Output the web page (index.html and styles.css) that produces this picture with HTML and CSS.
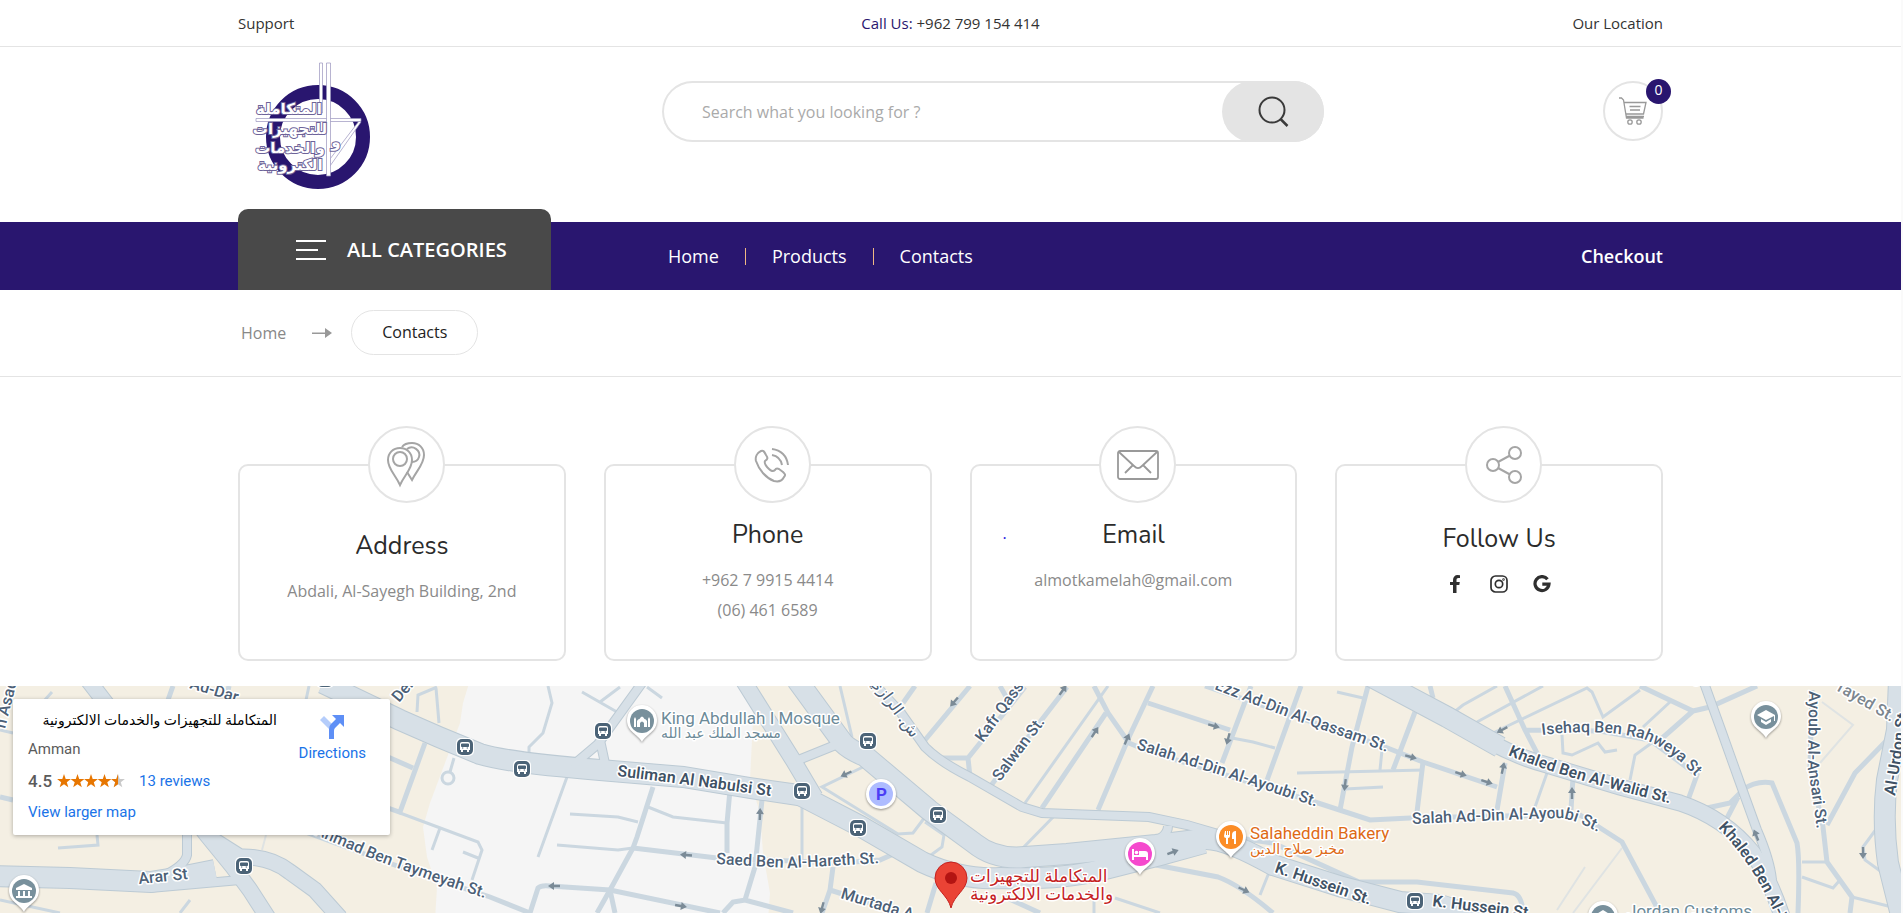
FILE: index.html
```
<!DOCTYPE html>
<html lang="en">
  <head>
    <title>Contacts</title>
    <meta charset="UTF-8">
    <meta name="viewport" content="width=device-width, initial-scale=1">
    <link rel="stylesheet" href="styles.css">
  </head>
  <body>
    <div class="top-bar">
      <div class="container top-bar-inner">
        <a href="#">Support</a>
        <a href="tel:+962799154414"><span class="call-label">Call Us:</span> +962 799 154 414</a>
        <a href="#map">Our Location</a>
      </div>
    </div>

    <header class="header">
      <div class="container header-inner">
        <a href="#" class="logo">
          <svg width="140" height="140" viewBox="-2 0 140 140">
            <circle cx="78" cy="82" r="45" fill="none" stroke="#29166f" stroke-width="14"/>
            <g fill="#fff" stroke="#9a93bd" stroke-width=".7">
              <path d="M79.500 8h3v50h-3z"/>
              <path d="M119 66L90 104v7L121 67z"/>
              <path d="M16 63.500h105v3H16z"/>
              <path d="M86.500 8h4v113h-4z"/>
            </g>
            <g class="logo-text">
              <text x="49" y="59">المتكاملة</text>
              <text x="50" y="79">للتجهيزات</text>
              <text x="50" y="98">والخدمات</text>
              <text x="50" y="115">الكترونية</text>
              <text x="96" y="92">و</text>
            </g>
          </svg>
        </a>
        <form class="search">
          <input type="text" placeholder="Search what you looking for ?" aria-label="Search">
          <button type="button" aria-label="Search">
            <svg width="34" height="34" viewBox="0 0 34 34" fill="none" stroke="#3a3a3a" stroke-width="2">
              <circle cx="16" cy="15" r="12.500"/>
              <path d="M24.500 24L31.500 31" stroke-width="2.500"/>
            </svg>
          </button>
        </form>
        <a href="#" class="cart" aria-label="Cart">
          <svg width="30" height="30" viewBox="0 0 30 30" fill="none" stroke="#999" stroke-width="1.300">
            <path d="M1 2h2.500l2 2 3 18h17M5.500 6.500H28l-2.500 11.500H8M8 20.500h18"/>
            <path d="M11.500 10.500h11M12 14h10"/>
            <circle cx="12" cy="26" r="2.200"/>
            <circle cx="21" cy="26" r="2.200"/>
          </svg>
          <span class="cart-count">0</span>
        </a>
      </div>
    </header>

    <nav class="nav">
      <div class="container nav-inner">
        <button type="button" class="categories">
          <span class="burger"><i></i><i></i><i></i></span>
          ALL CATEGORIES
        </button>
        <ul class="menu">
          <li><a href="#">Home</a></li>
          <li><a href="#">Products</a></li>
          <li><a href="#">Contacts</a></li>
        </ul>
        <a href="#" class="checkout">Checkout</a>
      </div>
    </nav>

    <div class="breadcrumb">
      <div class="container breadcrumb-inner">
        <a href="#">Home</a>
        <svg width="20" height="12" viewBox="0 0 20 12"><path d="M0 5.500h13V1l7 5-7 5V7H0z" fill="#999"/></svg>
        <span class="current">Contacts</span>
      </div>
    </div>

    <main class="container cards">
      <section class="card card-address">
        <span class="card-icon">
          <svg width="46" height="46" viewBox="0 0 46 46" fill="none" stroke="#a5a5a5" stroke-width="2">
            <path d="M17 6C10 6 5 11 5 18c0 9 7 14 12 25 5-11 12-16 12-25 0-7-5-12-12-12z"/>
            <circle cx="17" cy="17" r="7"/>
            <path d="M19 5c2-3 6-4 10-4 7 0 12 5 12 12 0 9-7 15-12 25l-5-8"/>
            <path d="M24 7c6-5 14 2 12 8-1 3-4 5-7 5"/>
          </svg>
        </span>
        <h3>Address</h3>
        <p>Abdali, Al-Sayegh Building, 2nd</p>
      </section>
      <section class="card">
        <span class="card-icon">
          <svg width="36" height="36" viewBox="0 0 36 36" fill="none" stroke="#a5a5a5" stroke-width="2">
            <path d="M7 4c-4 2-6 6-5 10 3 9 10 17 18 20 4 1 8 0 10-4 2-2 1-3-1-5l-4-3c-2-1-3-1-4 1-2 2-4 1-6-1-3-3-5-6-4-8 3-2 3-3 1-6-2-4-3-5-5-4z"/>
            <path d="M18 2c9 1 15 7 16 16M18 8c6 1 9 5 10 10"/>
          </svg>
        </span>
        <h3>Phone</h3>
        <p>+962 7 9915 4414</p>
        <p>(06) 461 6589</p>
      </section>
      <section class="card">
        <span class="card-icon">
          <svg width="42" height="30" viewBox="0 0 42 30" fill="none" stroke="#999" stroke-width="1.800">
            <rect x="1" y="1" width="40" height="28" rx="2"/>
            <path d="M2 2l15 14c3 3 5 3 8 0L40 2M16 15L8 23M26 15l8 8"/>
          </svg>
        </span>
        <a href="#" class="card-dot">.</a>
        <h3>Email</h3>
        <p>almotkamelah@gmail.com</p>
      </section>
      <section class="card card-social">
        <span class="card-icon">
          <svg width="36" height="38" viewBox="0 0 36 38" fill="none" stroke="#a5a5a5" stroke-width="2">
            <circle cx="29" cy="7" r="6"/>
            <circle cx="7" cy="19" r="6"/>
            <circle cx="29" cy="31" r="6"/>
            <path d="M12 16l12-6.500M12 22l12 6.500"/>
          </svg>
        </span>
        <h3>Follow Us</h3>
        <div class="social">
          <a href="#" aria-label="Facebook">
            <svg width="18" height="18" viewBox="0 0 18 18" fill="#2f2f2f"><path d="M6 18v-8H3V7h3V5c0-3 2-5 4.500-5l2.500.2V3h-1.500C10 3 9.500 3.700 9.500 5v2h3.300l-.5 3H9.500v8z"/></svg>
          </a>
          <a href="#" aria-label="Instagram">
            <svg width="18" height="18" viewBox="0 0 18 18" fill="none" stroke="#2f2f2f" stroke-width="1.700"><rect x="1" y="1" width="16" height="16" rx="4.500"/><circle cx="9" cy="9" r="3.700"/><circle cx="13.500" cy="4.500" r=".4"/></svg>
          </a>
          <a href="#" aria-label="Google">
            <svg width="18" height="18" viewBox="0 0 18 18" fill="none" stroke="#2f2f2f" stroke-width="3.200"><path d="M14.500 4.200A7 7 0 1 0 16 9.200H9.300"/></svg>
          </a>
        </div>
      </section>
    </main>

    <section class="map" id="map">
      <svg class="map-canvas" viewBox="0 686 1901 227" preserveAspectRatio="xMidYMin slice">
        <defs>
          <g id="major-roads">
            <path class="w22" d="M323 683L400 720Q440 738 480 754Q510 763 600 770L683 777L750 788L812 797"/>
            <path class="w16" d="M743 680L793 760L815 797"/>
            <path class="w22" d="M800 795L860 826L922 862Q960 880 1000 878Q1060 880 1101 870L1160 855L1204 843"/>
            <path class="w22" d="M797 680L843 743Q850 750 865 756L929 810L974 843Q995 860 1025 857L1067 854L1156 845L1204 839Q1225 838 1273 865L1342 887L1400 902L1440 905L1480 918"/>
            <path class="w10" d="M880 690L901 713L925 747Q940 762 970 777L1022 807L1042 813L1149 817L1187 825L1225 836"/>
            <path class="w10" d="M838 744L796 761M1168 826Q1168 838 1145 845M642 683L598 744L572 766M600 740L606 768"/>
            <path class="w22" d="M1370 676L1447 717L1500 747"/>
            <path class="w16" d="M1490 742Q1520 758 1547 765L1620 787L1680 803Q1725 818 1753 853Q1770 880 1782 916"/>
            <path class="w10" d="M1703 680L1720 727L1740 783L1757 830Q1770 860 1772 880"/>
            <path class="w22" d="M1899 680L1897 730L1887 780Q1882 820 1888 863L1901 915"/>
            <path class="w22" d="M-5 876L70 878L150 882L175 878L215 870"/>
            <path class="w16" d="M88 680L207 835L233 867L250 890L268 918"/>
            <path class="w16" d="M210 838L240 857Q270 856 290 872L315 890L340 918"/>
            <path class="w10" d="M187 830V855Q185 865 165 875M150 888L240 880"/>
          </g>
          <g id="pin">
            <path d="M0 20C-4 12-15 10-15-2A15 15 0 0 1 15-2C15 10 4 12 0 20z" fill="#fff"/>
          </g>
          <g id="bus">
            <rect x="-9" y="-9" width="18" height="18" rx="5" fill="#fff"/>
            <rect x="-8" y="-8" width="16" height="16" rx="5" fill="#4b6377"/>
            <path d="M-5-3Q-5-5-3-5H3Q5-5 5-3V3H4V5H2V3H-2V5H-4V3H-5z" fill="#fff"/>
            <path d="M-3.500-3h7v2.500h-7zM-3 1h1.300M1.700 1H3" fill="#4b6377" stroke="#4b6377"/>
          </g>
          <path id="arrow" d="M-6-1.200H0V-4L6 0 0 4V1.200H-6z" fill="#7b8b97"/>
        </defs>

        <rect y="680" width="1901" height="240" fill="#f4efe3"/>
        <path d="M470 680L463 703 460 723 430 803 423 827 427 857 437 887 435 920H768L770 893 763 853 760 813 750 780 755 680z" fill="#f5f5f5"/>

        <g class="minor thin">
          <path d="M400 813L478 842 482 850 472 880M440 828L432 850M463 852L478 858M454 758L450 772M417 712L418 695 437 687M436 688L439 723"/>
          <circle cx="448" cy="778" r="6"/>
          <path d="M52 692L43 702M0 730L13 733M97 835L98 845 58 848M190 900L180 913M0 900L60 913M309 686L306 700"/>
          <path d="M548 686L552 703 543 733 529 747V762M582 692L617 712M600 702L620 687M647 687L662 698M567 777L538 857"/>
          <path d="M570 814L618 817 638 822M648 807L673 817 727 823M557 845L618 850 633 848M802 803V860M840 686L852 737M863 767L822 787L898 834 913 833 925 817M925 822L944 835 942 847 931 855"/>
          <path d="M1108 686L1025 803M1232 738L1253 742 1275 748M1337 692L1363 698M1297 773L1424 770M1345 789L1383 787M1060 810L1018 853M1270 870L1260 895M1094 900V913M1115 898L1160 913"/>
          <path d="M1547 773L1535 807M1453 713L1463 705 1497 686M1455 712L1490 732M1477 722L1543 686M1493 733L1587 688 1592 692 1603 717 1640 690M1670 702L1643 727M1562 735L1563 753 1572 755 1598 743 1605 752 1617 750M1653 742L1635 755 1630 780"/>
          <path d="M1802 862H1825M1802 877L1833 888 1840 880M1852 897L1900 909M1877 828L1863 847 1865 860 1883 873M1380 770L1382 750"/>
        </g>
        <g class="minor faint">
          <path d="M1822 702L1853 725 1820 763M1622 848L1573 913M1585 867L1557 910M266 835L262 850"/>
        </g>
        <g class="minor">
          <path d="M425 743L400 812M388 757L413 768M388 808L402 813M173 686L168 700M229 686L226 700M0 797L13 800"/>
          <path d="M300 830L400 867 490 897 530 913M653 787L637 837 633 848 610 890 597 913M610 890L615 913"/>
          <path d="M633 848L717 858 840 863 880 860 898 852M730 790L727 823V853M762 800L755 867 745 900M530 913L538 888Q541 885 550 886L610 890 720 913M723 913L733 902 745 900 793 913M833 867L830 890 822 913M830 890L880 906"/>
          <path d="M936 883L927 913M1005 897L1040 913M970 686L925 740M915 686L903 703M1000 686L1008 700M943 758H968L970 777M968 758L1025 687M989 788L1067 687M1106 713L1042 808"/>
          <path d="M1094 686L1108 713 1129 743 1150 752 1318 803 1370 820 1410 818 1500 816 1580 815 1622 842 1660 913"/>
          <path d="M1153 686L1129 737 1098 810M1148 703L1230 730M1251 686L1222 763M1301 686L1266 783M1368 686L1352 747 1340 810M1205 686L1380 745 1423 762 1497 787"/>
          <path d="M1225 836L1273 843 1359 882H1417L1513 893Q1522 895 1523 913M1156 865L1218 877Q1240 885 1273 913"/>
          <path d="M1415 712L1393 770M1423 762L1417 812M1505 763L1497 810M1573 777L1571 810M1505 686L1525 730 1538 755M1525 730L1600 731 1650 740 1697 775 1688 800"/>
          <path d="M1640 686L1693 711 1710 707 1757 686M1693 711L1660 740M1742 790Q1757 780 1772 783L1797 843Q1800 860 1798 913M1707 808L1730 803 1740 793M1738 797L1725 822"/>
          <path d="M1890 737L1855 773 1827 825M1812 690L1810 767 1823 827 1827 862 1852 897 1850 913M1430 686L1433 698"/>
        </g>

        <use href="#major-roads" class="road-edge"/>
        <use href="#major-roads" class="road-fill"/>

        <use href="#arrow" transform="translate(686 855) rotate(185)"/>
        <use href="#arrow" transform="translate(554 886) rotate(180)"/>
        <use href="#arrow" transform="translate(681 906) rotate(10)"/>
        <use href="#arrow" transform="translate(760 814) rotate(-88)"/>
        <use href="#arrow" transform="translate(822 908) rotate(105)"/>
        <use href="#arrow" transform="translate(846 774) rotate(155)"/>
        <use href="#arrow" transform="translate(954 702) rotate(130)"/>
        <use href="#arrow" transform="translate(1063 690) rotate(-55)"/>
        <use href="#arrow" transform="translate(1095 732) rotate(-57)"/>
        <use href="#arrow" transform="translate(1127 739) rotate(-67)"/>
        <use href="#arrow" transform="translate(1214 726) rotate(15)"/>
        <use href="#arrow" transform="translate(1228 739) rotate(105)"/>
        <use href="#arrow" transform="translate(1345 785) rotate(97)"/>
        <use href="#arrow" transform="translate(1173 852) rotate(-20)"/>
        <use href="#arrow" transform="translate(1244 890) rotate(25)"/>
        <use href="#arrow" transform="translate(1411 757) rotate(15)"/>
        <use href="#arrow" transform="translate(1461 774) rotate(18)"/>
        <use href="#arrow" transform="translate(1487 782) rotate(18)"/>
        <use href="#arrow" transform="translate(1503 768) rotate(-78)"/>
        <use href="#arrow" transform="translate(1572 793) rotate(-90)"/>
        <use href="#arrow" transform="translate(1502 730) rotate(152)"/>
        <use href="#arrow" transform="translate(1756 835) rotate(-112)"/>
        <use href="#arrow" transform="translate(1863 853) rotate(90)"/>

        <defs>
          <path id="p-ahmad" d="M314 834L370 858L430 880L520 910"/>
          <path id="p-suliman" d="M617 776L690 785L800 800"/>
          <path id="p-saed" d="M716 864L790 868L900 862"/>
          <path id="p-ezz" d="M1214 689L1300 722L1410 760"/>
          <path id="p-salah1" d="M1136 749L1220 775L1350 818"/>
          <path id="p-salah2" d="M1412 824Q1500 820 1560 818Q1580 820 1615 842"/>
          <path id="p-isehaq" d="M1542 735Q1600 728 1640 738Q1675 750 1705 788"/>
          <path id="p-khaled1" d="M1508 755Q1560 778 1690 808"/>
          <path id="p-khaled2" d="M1718 828Q1755 865 1782 930"/>
          <path id="p-ayoub" d="M1809 691L1808 767L1820 850"/>
        </defs>
        <g class="street">
          <text transform="translate(139 884) rotate(-6)">Arar St</text>
          <text><textPath href="#p-ahmad">Ahmad Ben Taymeyah St.</textPath></text>
          <text class="strong"><textPath href="#p-suliman">Suliman Al Nabulsi St</textPath></text>
          <text><textPath href="#p-saed">Saed Ben Al-Hareth St.</textPath></text>
          <text transform="translate(840 898) rotate(17)">Murtada A</text>
          <text transform="translate(983 743) rotate(-54)">Kafr Qassem</text>
          <text transform="translate(1000 782) rotate(-53)">Salwan St.</text>
          <text transform="translate(891 710) rotate(54)" text-anchor="middle">ش. الرازي</text>
          <text><textPath href="#p-ezz">Ezz Ad-Din Al-Qassam St.</textPath></text>
          <text><textPath href="#p-salah1">Salah Ad-Din Al-Ayoubi St.</textPath></text>
          <text><textPath href="#p-salah2">Salah Ad-Din Al-Ayoubi St.</textPath></text>
          <text><textPath href="#p-isehaq">Isehaq Ben Rahweya St</textPath></text>
          <text class="strong"><textPath href="#p-khaled1">Khaled Ben Al-Walid St.</textPath></text>
          <text class="strong"><textPath href="#p-khaled2">Khaled Ben Al-Walid</textPath></text>
          <text><textPath href="#p-ayoub">Ayoub Al-Ansari St.</textPath></text>
          <text class="strong" transform="translate(1895 796) rotate(-81)">Al-Urdon St</text>
          <text class="plain" transform="translate(1834 689) rotate(30)">Tayed St.</text>
          <text class="strong" transform="translate(1274 872) rotate(19)">K. Hussein St.</text>
          <text class="strong" transform="translate(1432 906) rotate(7)">K. Hussein St.</text>
          <text transform="translate(399 703) rotate(-50)">Der</text>
          <text transform="translate(189 688) rotate(17)">Ad-Dar</text>
          <text transform="translate(5 729) rotate(-76)">n Asad</text>
        </g>

        <use href="#bus" x="325" y="679"/>
        <use href="#bus" x="465" y="747"/>
        <use href="#bus" x="522" y="769"/>
        <use href="#bus" x="603" y="731"/>
        <use href="#bus" x="868" y="741"/>
        <use href="#bus" x="802" y="791"/>
        <use href="#bus" x="858" y="828"/>
        <use href="#bus" x="938" y="815"/>
        <use href="#bus" x="244" y="866"/>
        <use href="#bus" x="1415" y="901"/>

        <g class="poi-pin" transform="translate(642 722)">
          <use href="#pin"/>
          <circle cy="-1" r="12" fill="#78909c"/>
          <path d="M-8 5V-3l1-2 1 2V5zM8 5V-3L7-5 6-3V5zM-5 5V-1Q-4-3-2.500-3Q0-8 2.500-3Q4-3 5-1V5H2V1Q0-2-2 1V5z" fill="#fff"/>
        </g>
        <g class="poi-pin" transform="translate(24 892)">
          <use href="#pin"/>
          <circle cy="-1" r="12" fill="#78909c"/>
          <path d="M-8-4L0-8 8-4V-2H-8zM-6-1h2v5h-2zM-1-1h2v5h-2zM4-1h2v5H4zM-8 4H8v2H-8z" fill="#fff"/>
        </g>
        <g class="poi-pin" transform="translate(1766 718)">
          <use href="#pin"/>
          <circle cy="-1" r="12" fill="#78909c"/>
          <path d="M-9-3L0-8 9-3V3H8V-2L0 2zM-5 1L0 4 5 1V4L0 7-5 4z" fill="#fff"/>
        </g>
        <g class="poi-pin" transform="translate(1603 918)">
          <use href="#pin"/>
          <circle cy="-1" r="12" fill="#78909c"/>
          <path d="M-8-3L0-8 8-3V5H-8z" fill="#fff"/>
        </g>
        <g class="poi-pin" transform="translate(1140 855)">
          <use href="#pin"/>
          <circle cy="-1" r="12" fill="#f549cd"/>
          <path d="M-8-6h2v6h5v-4h6q3 0 3 3V5H6V2H-6V5H-8z" fill="#fff"/>
          <circle cx="-3.500" cy="-2.500" r="1.800" fill="#fff"/>
        </g>
        <g class="poi-pin" transform="translate(1231 838)">
          <use href="#pin"/>
          <circle cy="-1" r="12" fill="#fb8c26"/>
          <path d="M-6-7h1v4h1v-4h1v4h1v-4h1v5q0 2-2 2V6h-2V0q-2 0-2-2zM5-7V6H3V1H1V-3Q1-7 5-7z" fill="#fff"/>
        </g>
        <g class="poi-pin">
          <circle cx="881" cy="794" r="15" fill="#fff"/>
          <circle cx="881" cy="794" r="12" fill="#aebcff"/>
        </g>
        <text x="876" y="800" class="parking">P</text>
        <circle cx="1696" cy="680" r="6" fill="#78909c" stroke="#fff" stroke-width="2"/>

        <g class="poi">
          <text x="661" y="724">King Abdullah I Mosque</text>
          <text x="661" y="738" class="small">مسجد الملك عبد الله</text>
          <text x="1627" y="917">Jordan Customs</text>
          <text x="1250" y="839" class="food">Salaheddin Bakery</text>
          <text x="1250" y="854" class="food small">مخبز صلاح الدين</text>
          <text x="970" y="882" class="place">المتكاملة للتجهيزات</text>
          <text x="970" y="900" class="place">والخدمات الالكترونية</text>
        </g>

        <path d="M951 908C948 895 935 890 935 878A16 16 0 0 1 967 878C967 890 954 895 951 908z" fill="#ea4335" stroke="#c5221f"/>
        <circle cx="951" cy="878" r="6" fill="#b31412"/>
      </svg>

      <div class="place-card">
        <div class="place-info">
          <h4 dir="rtl">المتكاملة للتجهيزات والخدمات الالكترونية</h4>
          <p>Amman</p>
          <div class="rating">
            <strong>4.5</strong>
            <svg width="68" height="14" viewBox="0 0 68 14">
              <defs>
                <path id="star" d="M7 0l1.700 4.900 5.200.1-4.100 3.200 1.500 5L7 10.200 2.700 13.200l1.500-5L.1 5l5.200-.1z"/>
              </defs>
              <g fill="#e77600">
                <use href="#star"/>
                <use href="#star" x="13.500"/>
                <use href="#star" x="27"/>
                <use href="#star" x="40.500"/>
              </g>
              <use href="#star" x="54" fill="#c9c9c9"/>
              <path d="M61 0v10.200l-4.300 3 1.500-5L54.100 5l5.200-.1z" fill="#e77600"/>
            </svg>
            <a href="#">13 reviews</a>
          </div>
          <a href="#">View larger map</a>
        </div>
        <a href="#" class="directions">
          <svg width="24" height="24" viewBox="0 0 24 24">
            <path d="M0 5l4-4 8 8-3 5z" fill="#b5cdfb"/>
            <path d="M9 24V14q0-3 2-5l5-5-4-4h12v12l-4-4-5 5q-1 1-1 3v8z" fill="#5e8ff6"/>
          </svg>
          Directions
        </a>
      </div>
    </section>
  </body>
</html>
```
FILE: styles.css
```
* {
  box-sizing: border-box;
}

body {
  display: flex;
  flex-direction: column;
  min-height: 100vh;
  margin: 0;
  border-right: 2px solid #fafafa;
  background-color: #fff;
  color: #333;
  font-family: "Open Sans", "DejaVu Sans", sans-serif;
  font-size: 16px;
}

a {
  color: inherit;
  text-decoration: none;
}

button {
  border: 0;
  cursor: pointer;
  font-family: inherit;
}

h3, h4, p, ul {
  margin: 0;
  padding: 0;
}

svg {
  display: block;
}

.container {
  width: 100%;
  max-width: 1425px;
  margin: 0 auto;
}

/* top bar */
.top-bar {
  border-bottom: 1px solid #e4e4e4;
  font-size: 15px;
  line-height: 46px;
}

.top-bar-inner {
  display: grid;
  grid-template-columns: 1fr auto 1fr;
}

.top-bar-inner a:last-child {
  text-align: right;
}

.call-label {
  color: #29166f;
}

/* header */
.header-inner {
  display: grid;
  grid-template-columns: 424px minmax(0, 662px) 1fr;
  align-items: start;
  padding: 8px 0 27px;
}

.logo {
  justify-self: start;
}

.logo-text {
  fill: #fff;
  stroke: #6d6399;
  stroke-width: 2px;
  paint-order: stroke;
  font-family: "DejaVu Sans", sans-serif;
  font-size: 15px;
  font-weight: bold;
  text-anchor: middle;
}

.search {
  display: flex;
  height: 61px;
  margin-top: 26px;
  border-radius: 31px;
  box-shadow: inset 0 0 0 2px #e4e4e4;
}

.search input {
  flex: 1;
  min-width: 0;
  padding: 0 40px;
  border: 0;
  background: none;
  color: #333;
  font-family: inherit;
  font-size: 16px;
  outline: 0;
}

.search input::placeholder {
  color: #aaa;
}

.search button {
  display: flex;
  align-items: center;
  justify-content: center;
  width: 102px;
  border-radius: 31px;
  background-color: #e4e4e4;
}

.cart {
  position: relative;
  display: flex;
  align-items: center;
  justify-content: center;
  justify-self: end;
  width: 60px;
  height: 60px;
  margin-top: 26px;
  border: 2px solid #e4e4e4;
  border-radius: 50%;
}

.cart-count {
  position: absolute;
  top: -4px;
  right: -10px;
  width: 25px;
  height: 25px;
  border-radius: 50%;
  background-color: #29166f;
  color: #fff;
  font-size: 14px;
  line-height: 22px;
  text-align: center;
}

/* navigation */
.nav {
  background-color: #29166f;
  color: #fff;
  font-size: 18px;
}

.nav-inner {
  display: flex;
  align-items: center;
  height: 68px;
}

.categories {
  display: flex;
  align-items: center;
  align-self: flex-end;
  gap: 21px;
  width: 313px;
  height: 81px;
  padding: 0 0 0 58px;
  border-radius: 10px 10px 0 0;
  background-color: #494949;
  color: #fff;
  font-size: 20px;
  font-weight: 600;
}

.burger {
  display: grid;
  gap: 7px;
  width: 30px;
}

.burger i {
  height: 2px;
  background-color: #fff;
}

.burger i:nth-child(2) {
  width: 22px;
}

.menu {
  display: flex;
  margin-left: 91px;
  font-weight: 500;
  line-height: 17px;
  list-style: none;
}

.menu li {
  padding: 0 26px;
}

.menu li + li {
  border-left: 1px solid #f0b884;
}

.checkout {
  margin-left: auto;
  font-weight: 600;
}

/* breadcrumb */
.breadcrumb {
  border-bottom: 1px solid #e4e4e4;
}

.breadcrumb-inner {
  display: flex;
  align-items: center;
  padding: 20px 3px 21px;
  color: #888;
}

.breadcrumb-inner svg {
  margin: 0 19px 0 26px;
}

.current {
  padding: 0 30px;
  border: 1px solid #e4e4e4;
  border-radius: 23px;
  color: #222;
  line-height: 43px;
}

/* contact cards */
.cards {
  display: grid;
  grid-template-columns: repeat(4, 1fr);
  gap: 38px;
  padding: 87px 0 25px;
}

.card {
  position: relative;
  min-height: 197px;
  padding-top: 50px;
  border: 2px solid #e4e4e4;
  border-radius: 10px;
  color: #8a8a8a;
  line-height: 30px;
  text-align: center;
}

.card-address {
  padding-top: 61px;
}

.card-social {
  padding-top: 54px;
}

.card h3 {
  margin-bottom: 11px;
  color: #2b2b2b;
  font-family: Nunito, Lato, sans-serif;
  font-size: 25px;
  font-weight: 400;
  line-height: 38px;
}

.card-icon {
  position: absolute;
  top: -40px;
  left: calc(50% - 34px);
  display: flex;
  align-items: center;
  justify-content: center;
  width: 77px;
  height: 77px;
  border: 2px solid #e4e4e4;
  border-radius: 50%;
  background-color: #fff;
}

.card-dot {
  position: absolute;
  top: 52px;
  left: 31px;
  color: #2a17e0;
}

.social {
  display: flex;
  justify-content: center;
  gap: 25px;
  padding-top: 6px;
}

/* map */
.map {
  position: relative;
  flex: 1;
  min-height: 227px;
  overflow: hidden;
  font-family: Roboto, "DejaVu Sans", sans-serif;
}

.map-canvas {
  position: absolute;
  width: 100%;
  height: 100%;
}

.minor {
  fill: none;
  stroke: #cbd7e0;
  stroke-width: 5px;
}

.thin {
  stroke-width: 3px;
}

.faint {
  stroke: #dfe3e3;
  stroke-width: 2px;
}

.road-edge {
  --edge: 2px;
  fill: none;
  stroke: #bccad4;
}

.road-fill {
  --edge: 0px;
  fill: none;
  stroke: #d7e0e7;
}

.w22 {
  stroke-width: calc(20px + var(--edge));
}

.w16 {
  stroke-width: calc(15px + var(--edge));
}

.w10 {
  stroke-width: calc(8px + var(--edge));
}

.street text,
.poi text {
  fill: #4c6076;
  stroke: #fff;
  stroke-width: 3px;
  stroke-linejoin: round;
  paint-order: stroke;
  font-size: 16px;
  font-weight: 500;
}

.street .strong {
  fill: #3f5265;
  font-weight: 600;
}

.street .plain {
  fill: #7c868e;
}

.poi text {
  fill: #6c8a98;
  font-size: 17px;
  font-weight: 400;
}

.poi .small {
  font-size: 14px;
}

.poi .food {
  fill: #de6a15;
}

.poi .place {
  fill: #c5221f;
}

.poi-pin {
  filter: drop-shadow(0 1px 1px rgba(0, 0, 0, 0.4));
}

.parking {
  fill: #4b3df5;
  font-size: 17px;
  font-weight: 700;
}

.place-card {
  position: absolute;
  top: 13px;
  left: 13px;
  display: flex;
  width: 377px;
  height: 136px;
  padding: 11px 24px 0 15px;
  border-radius: 2px;
  background-color: #fff;
  box-shadow: 0 1px 4px rgba(0, 0, 0, 0.3);
  color: #5b5b5b;
  font-size: 15px;
  line-height: 20px;
}

.place-card a {
  color: #1a73e8;
}

.place-info {
  width: 249px;
}

.place-info h4 {
  margin-bottom: 9px;
  color: #000;
  font-size: 14px;
  font-weight: 400;
  white-space: nowrap;
}

.rating {
  display: flex;
  align-items: center;
  gap: 5px;
  margin: 12px 0 11px;
}

.rating strong {
  font-size: 17px;
  font-weight: 500;
}

.rating a {
  margin-left: 9px;
}

.directions {
  display: flex;
  flex-direction: column;
  align-items: center;
  gap: 4px;
  margin-left: auto;
  padding-top: 5px;
}
```
